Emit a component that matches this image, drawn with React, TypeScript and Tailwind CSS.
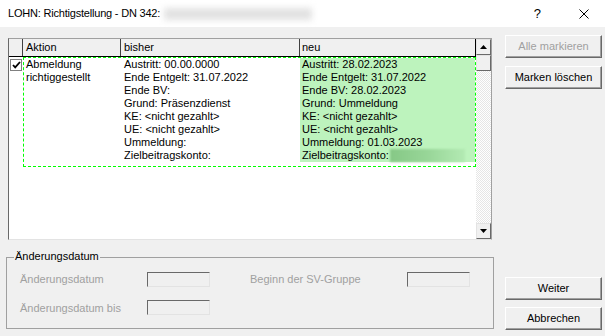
import type { ReactNode } from "react";

const bisher = [
  "Austritt: 00.00.0000",
  "Ende Entgelt: 31.07.2022",
  "Ende BV:",
  "Grund: Präsenzdienst",
  "KE: <nicht gezahlt>",
  "UE: <nicht gezahlt>",
  "Ummeldung:",
  "Zielbeitragskonto:",
];

const neu = [
  "Austritt: 28.02.2023",
  "Ende Entgelt: 31.07.2022",
  "Ende BV: 28.02.2023",
  "Grund: Ummeldung",
  "KE: <nicht gezahlt>",
  "UE: <nicht gezahlt>",
  "Ummeldung: 01.03.2023",
];

const WinButton = ({ children, disabled }: { children: ReactNode; disabled?: boolean }) => (
  <div
    className={`flex h-[23px] items-center justify-center border border-t-white border-l-white border-r-[#696969] border-b-[#696969] bg-[#f0f0f0] text-[11px] shadow-[inset_-1px_-1px_0_#a0a0a0] ${
      disabled ? "text-[#a0a0a0]" : "text-black"
    }`}
  >
    {children}
  </div>
);

const ScrollButton = ({ down }: { down?: boolean }) => (
  <div className="flex h-[16px] items-center justify-center border border-t-[#e3e3e3] border-l-[#e3e3e3] border-r-[#696969] border-b-[#696969] bg-[#f0f0f0]">
    {down !== undefined && (
      <svg width="7" height="4" viewBox="0 0 7 4">
        <path d={down ? "M0 0h7L3.5 4z" : "M3.5 0L7 4H0z"} fill="#000" />
      </svg>
    )}
  </div>
);

const DisabledInput = () => (
  <div className="h-[15px] w-[63px] border border-t-[#696969] border-l-[#696969] border-r-[#e3e3e3] border-b-[#e3e3e3] bg-[#f0f0f0]" />
);

export default function App() {
  return (
    <div className="flex h-[336px] w-[605px] flex-col overflow-hidden bg-[#f0f0f0] font-['Liberation_Sans',Arial,sans-serif] text-black">
      {/* Title bar */}
      <div className="flex h-[27px] shrink-0 items-center bg-white pl-[8px]">
        <span className="text-[11px] tracking-[-0.2px]">LOHN: Richtigstellung - DN 342:</span>
        <span className="ml-[4px] h-[12px] w-[148px] bg-[#e2e2e2] blur-[3px]" />
        <span className="ml-auto text-[13px]">?</span>
        <svg className="ml-[38px] mr-[16px]" width="10" height="10" viewBox="0 0 10 10">
          <path d="M0.5 0.5l9 9M9.5 0.5l-9 9" stroke="#000" strokeWidth="1" />
        </svg>
      </div>

      <div className="flex flex-1">
        {/* Left column */}
        <div className="flex flex-col pl-[8px] pt-[11px]">
          {/* List */}
          <div className="flex h-[202px] w-[484px] border border-t-[#a0a0a0] border-l-[#696969] border-r-[#a0a0a0] border-b-[#e3e3e3] bg-white text-[11px] leading-[13px]">
            <div className="flex w-[467px] flex-col">
              {/* Header */}
              <div className="flex h-[18px] border-b border-black bg-[#f0f0f0]">
                <div className="w-[14px] border-r border-[#404040]" />
                <div className="flex w-[98px] items-center border-r border-[#404040] pl-[3px]">Aktion</div>
                <div className="flex w-[179px] items-center border-r border-[#404040] pl-[3px]">bisher</div>
                <div className="flex w-[176px] items-center border-r border-black pl-[2px]">neu</div>
              </div>
              {/* Row */}
              <div className="flex">
                <div className="w-[14px] pl-[1px] pt-[2px]">
                  <div className="flex h-[12px] w-[12px] items-center justify-center border border-[#808080] bg-white">
                    <svg width="9" height="8" viewBox="0 0 9 8">
                      <path d="M1 4l2.2 2.4L8 1" fill="none" stroke="#000" strokeWidth="1.8" />
                    </svg>
                  </div>
                </div>
                <div className="flex w-[453px] border border-dashed border-[#00ff00] pb-[4px]">
                  <div className="w-[97px] pl-[2px]">
                    <div>Abmeldung</div>
                    <div>richtiggestellt</div>
                  </div>
                  <div className="w-[179px] pl-[3px]">
                    {bisher.map((t) => (
                      <div key={t}>{t}</div>
                    ))}
                  </div>
                  <div className="flex-1 bg-[#bdf3bd] pl-[2px]">
                    {neu.map((t) => (
                      <div key={t}>{t}</div>
                    ))}
                    <div className="flex items-center">
                      <span>Zielbeitragskonto:</span>
                      <span className="ml-[1px] h-[13px] w-[75px] bg-linear-to-r from-[#86c886] via-[#98d698] to-[#b3eab3] blur-[1px]" />
                    </div>
                  </div>
                </div>
              </div>
            </div>
            {/* Scrollbar */}
            <div className="flex w-[15px] flex-col">
              <ScrollButton down={false} />
              <ScrollButton />
              <div className="flex-1 bg-[repeating-conic-gradient(#e6e6e6_0_25%,#fff_0_50%)] bg-[length:2px_2px]" />
              <ScrollButton down />
            </div>
          </div>

          {/* Group box */}
          <div className="relative -ml-[2px] mt-[17px] h-[72px] w-[488px] border border-[#a0a0a0] pl-[13px] pt-[13px] text-[11px]">
            <span className="absolute -top-[8px] left-[7px] bg-[#f0f0f0] px-[1px] leading-[13px]">Änderungsdatum</span>
            <div className="grid grid-cols-[127px_63px_40px_157px_63px] items-center gap-y-[12px] text-[#a0a0a0]">
              <span>Änderungsdatum</span>
              <DisabledInput />
              <span />
              <span>Beginn der SV-Gruppe</span>
              <DisabledInput />
              <span>Änderungsdatum bis</span>
              <DisabledInput />
            </div>
          </div>
        </div>

        {/* Right column */}
        <div className="ml-[11px] flex w-[97px] flex-col pb-[6px] pt-[8px]">
          <WinButton disabled>Alle markieren</WinButton>
          <div className="mt-[8px]">
            <WinButton>Marken löschen</WinButton>
          </div>
          <div className="flex-1" />
          <WinButton>Weiter</WinButton>
          <div className="mt-[7px]">
            <WinButton>Abbrechen</WinButton>
          </div>
        </div>
      </div>
    </div>
  );
}
